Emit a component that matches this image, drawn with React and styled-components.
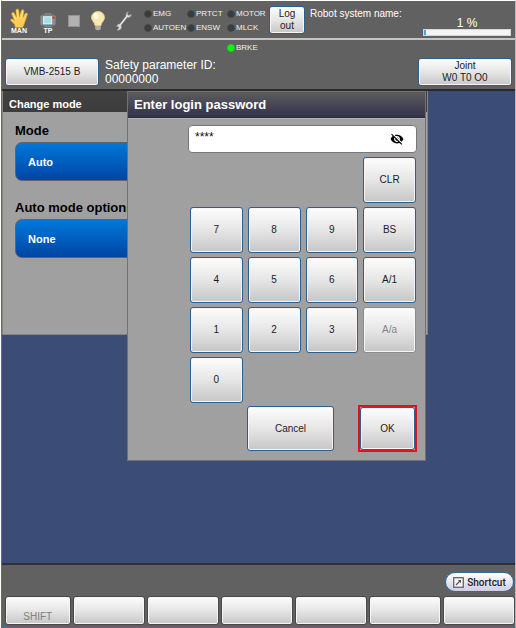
import React, { useState } from "react";
import styled, { createGlobalStyle } from "styled-components";
import { MdVisibilityOff } from "react-icons/md";

const lamps = ["EMG", "PRTCT", "MOTOR", "AUTOEN", "ENSW", "MLCK"];

const keys = [
  { label: "CLR", column: 4 },
  { label: "7" },
  { label: "8" },
  { label: "9" },
  { label: "BS" },
  { label: "4" },
  { label: "5" },
  { label: "6" },
  { label: "A/1" },
  { label: "1" },
  { label: "2" },
  { label: "3" },
  { label: "A/a", disabled: true },
  { label: "0" },
];

const functionKeys = ["SHIFT", "", "", "", "", "", ""];

const HandIcon = () => (
  <svg width="18" height="20" viewBox="0 0 18 20">
    <path
      d="M5.4 19.5 L4.4 16 L1 13 Q-.2 11.4 1.4 10.9 Q2.4 10.8 4.4 12.2 L1.8 6.4 Q1.3 4.8 2.6 4.4 Q3.7 4.2 4.4 5.5 L6.5 9.2 L5.9 2.6 Q6 1 7.3.9 Q8.6.9 8.8 2.4 L9.6 8.8 L11.3 2.6 Q11.9 1.3 13.1 1.7 Q14.2 2.2 13.9 3.6 L12.9 9.4 L15.2 5.6 Q16.2 4.4 17.1 5.2 Q17.9 6 17.2 7.3 L14.8 14.2 L12.8 19.5 Z"
      fill="#ffcf55"
      stroke="#d99a2c"
      strokeWidth="0.5"
    />
    <path d="M7.2 2.6 L7.9 10 M3 6 L5.8 11.4 M12.8 3.2 L11.2 10" stroke="#ffe595" strokeWidth="0.9" fill="none" />
  </svg>
);

const PendantIcon = () => (
  <svg width="16" height="15" viewBox="0 0 16 15">
    <path d="M4.6 2.2 L5.4 .8 H10.6 L11.4 2.2" fill="none" stroke="#8b8f92" strokeWidth="1.2" />
    <rect x="0.5" y="2.2" width="15" height="10" rx="1.6" fill="#8b9193" stroke="#777d80" />
    <rect x="3.6" y="3.8" width="8" height="7" fill="#9fe0ea" stroke="#e6f2f4" />
    <circle cx="13.5" cy="4.8" r="1.2" fill="#f22" />
    <path d="M4 12.7 L4.6 14.2 H11.4 L12 12.7 Z" fill="#858a8d" />
  </svg>
);

const BulbIcon = () => (
  <svg width="14" height="20" viewBox="0 0 14 20">
    <path
      d="M7 .5 C3.2.5.5 3.2.5 6.6 C.5 9.8 3.6 11.1 4.2 14.8 H9.8 C10.4 11.1 13.5 9.8 13.5 6.6 C13.5 3.2 10.8.5 7 .5 Z"
      fill="#fbe8b0"
      stroke="#ecd28c"
      strokeWidth="0.8"
    />
    <ellipse cx="5" cy="5" rx="2.3" ry="3" fill="#fffbe4" />
    <path d="M4.2 15 H9.8 V17.5 L8.4 19.3 H5.6 L4.2 17.5 Z" fill="#969696" />
    <path d="M4.2 16 H9.8 M4.5 18 H9.5" stroke="#ddd" strokeWidth="0.7" />
  </svg>
);

const WrenchIcon = () => (
  <svg width="16" height="20" viewBox="0 0 16 20">
    <path
      d="M12.4.6 L11.4 3.2 L12.8 4.4 L15.4 3.2 Q15.3 6.2 12.5 6.4 L11.4 6.2 L5.2 14 Q6.2 16.8 4.3 18.6 Q2.6 19.8 .9 19.1 L2.8 17.2 L2.2 15.6 L.4 15.4 Q1.4 12.8 3.8 13 L9.9 5.2 Q9.6 1.6 12.4.6 Z"
      fill="#dedede"
      stroke="#8a8a8a"
      strokeWidth="0.5"
    />
    <path d="M10.7 5.8 L4.5 13.7" stroke="#fff" strokeWidth="0.7" />
  </svg>
);

const ShortcutIcon = () => (
  <svg width="11" height="11" viewBox="0 0 11 11">
    <rect x="0.7" y="0.7" width="9.6" height="9.6" fill="#f4f4f8" stroke="#666" strokeWidth="1.3" />
    <path d="M3 8 L7.3 3.7" stroke="#555" strokeWidth="1.2" />
    <path d="M4.8 3 H8 V6.2 Z" fill="#555" />
  </svg>
);

const App = () => {
  const [password, setPassword] = useState("****");

  const handleKey = (label) => {
    if (label === "CLR") setPassword("");
    else if (label === "BS") setPassword(password.slice(0, -1));
    else if (label.length === 1) setPassword(password + "*");
  };

  return (
    <>
      <GlobalStyle />
      <Screen>
        <StatusBar>
          <StatusIcons>
            <StatusIcon>
              <HandIcon />
              <IconLabel>MAN</IconLabel>
            </StatusIcon>
            <StatusIcon>
              <PendantIcon />
              <IconLabel>TP</IconLabel>
            </StatusIcon>
            <StopMark />
            <BulbIcon />
            <WrenchIcon />
          </StatusIcons>
          <LampGrid>
            {lamps.map((name) => (
              <Lamp key={name}>
                <Led />
                {name}
              </Lamp>
            ))}
          </LampGrid>
          <LogoutButton>Log out</LogoutButton>
          <SystemName>Robot system name:</SystemName>
          <Speed>
            <SpeedText>1 %</SpeedText>
            <SpeedBar role="progressbar" aria-label="Speed" aria-valuenow={1}>
              <SpeedFill />
            </SpeedBar>
          </Speed>
        </StatusBar>

        <InfoBar>
          <BrakeRow>
            <Lamp>
              <Led $on />
              BRKE
            </Lamp>
          </BrakeRow>
          <InfoRow>
            <RobotButton>VMB-2515 B</RobotButton>
            <SafetyText>
              Safety parameter ID:
              <br />
              00000000
            </SafetyText>
            <JointButton>
              Joint
              <br />
              W0 T0 O0
            </JointButton>
          </InfoRow>
        </InfoBar>

        <Workspace>
          <Panel>
            <PanelTitle>Change mode</PanelTitle>
            <PanelBody>
              <FieldLabel htmlFor="mode">Mode</FieldLabel>
              <ModeSelect id="mode">
                <option>Auto</option>
              </ModeSelect>
              <FieldLabel htmlFor="options">Auto mode options</FieldLabel>
              <ModeSelect id="options">
                <option>None</option>
              </ModeSelect>
            </PanelBody>
          </Panel>

          <Dialog role="dialog" aria-labelledby="dialog-title">
            <DialogTitle id="dialog-title">Enter login password</DialogTitle>
            <DialogBody>
              <PasswordBox>
                <PasswordInput
                  aria-label="Password"
                  value={password}
                  onChange={(e) => setPassword(e.target.value)}
                />
                <EyeButton aria-label="Show password">
                  <MdVisibilityOff size={14} />
                </EyeButton>
              </PasswordBox>
              <Keypad>
                {keys.map((key) => (
                  <Key
                    key={key.label}
                    $column={key.column}
                    disabled={key.disabled}
                    onClick={() => handleKey(key.label)}
                  >
                    {key.label}
                  </Key>
                ))}
              </Keypad>
              <Actions>
                <CancelButton>Cancel</CancelButton>
                <OkFrame>
                  <OkButton>OK</OkButton>
                </OkFrame>
              </Actions>
            </DialogBody>
          </Dialog>
        </Workspace>

        <Footer>
          <ShortcutButton>
            <ShortcutIcon />
            Shortcut
          </ShortcutButton>
          <FunctionKeys>
            {functionKeys.map((label, i) => (
              <FunctionKey key={i} aria-label={label || `F${i}`}>
                {label}
              </FunctionKey>
            ))}
          </FunctionKeys>
        </Footer>
      </Screen>
    </>
  );
};

const GlobalStyle = createGlobalStyle`
  * {
    box-sizing: border-box;
  }
  body {
    margin: 0;
    background: #fff;
    font-family: "Liberation Sans", Arial, sans-serif;
  }
  button, input, select {
    font-family: inherit;
    margin: 0;
  }
  svg {
    display: block;
    flex: none;
  }
`;

const Screen = styled.div`
  min-height: 100vh;
  display: flex;
  flex-direction: column;
  border: 1px solid #2e7d9e;
  border-top-color: #fff;
  border-right-color: #b4b8ba;
  margin-left: 1px;
`;

// Top bars

const StatusBar = styled.header`
  display: flex;
  align-items: center;
  height: 39px;
  padding: 0 4px 0 8px;
  background: #616161;
  border-bottom: 2px solid #c4c4c4;
`;

const StatusIcons = styled.div`
  display: flex;
  align-items: center;
  gap: 11px;
  width: 134px;
  padding-top: 3px;
  flex: none;
`;

const StatusIcon = styled.div`
  display: flex;
  flex-direction: column;
  align-items: center;
  justify-content: flex-end;
  width: 18px;
  height: 26px;
`;

const IconLabel = styled.span`
  height: 6px;
  color: #fff;
  font-size: 7px;
  font-weight: bold;
  line-height: 6px;
`;

const StopMark = styled.div`
  width: 12px;
  height: 12px;
  flex: none;
  background: #b2b2b2;
  border: 1px solid #929292;
`;

const LampGrid = styled.div`
  display: grid;
  grid-template-columns: 43px 40px 42px;
  row-gap: 2px;
  padding-top: 2px;
  flex: none;
`;

const Lamp = styled.div`
  display: flex;
  align-items: center;
  gap: 1px;
  height: 12px;
  color: #f0f0f0;
  font-size: 8px;
  line-height: 12px;
  white-space: nowrap;
`;

const Led = styled.span`
  width: 8px;
  height: 8px;
  flex: none;
  border-radius: 50%;
  background: ${(props) => (props.$on ? "#00ff00" : "#3c3c3c")};
  border: 1px solid ${(props) => (props.$on ? "#1ed01e" : "#484848")};
`;

const PushButton = styled.button`
  padding: 0;
  border: 1px solid #2d5f8e;
  border-radius: 3px;
  background: linear-gradient(#fdfdfd, #e6e6e6 50%, #c6c6c6);
  box-shadow: inset 0 0 0 1px #f6f6f6;
  color: #1c1c24;
  font-size: 10px;
  line-height: 12px;
`;

const LogoutButton = styled(PushButton)`
  width: 36px;
  height: 28px;
  padding: 0 6px;
  flex: none;
`;

const SystemName = styled.div`
  align-self: flex-start;
  padding: 7px 0 0 5px;
  color: #fff;
  font-size: 10px;
  line-height: 12px;
`;

const Speed = styled.div`
  width: 88px;
  margin-left: auto;
  padding-top: 13px;
`;

const SpeedText = styled.div`
  color: #fff;
  font-size: 12px;
  line-height: 12px;
  text-align: center;
`;

const SpeedBar = styled.div`
  height: 7px;
  background: #f4f4f4;
  border: 1px solid #d8d8d8;
`;

const SpeedFill = styled.div`
  width: 2%;
  height: 100%;
  background: #4ea3e0;
`;

const InfoBar = styled.section`
  height: 51px;
  padding: 2px 3px 0;
  background: #616161;
  border-bottom: 2px solid #2a2a2a;
`;

const BrakeRow = styled.div`
  padding-left: 222px;
  height: 14px;
`;

const InfoRow = styled.div`
  display: flex;
  align-items: center;
  height: 32px;
`;

const RobotButton = styled(PushButton)`
  width: 94px;
  height: 28px;
`;

const SafetyText = styled.div`
  padding-left: 6px;
  color: #fff;
  font-size: 12px;
  line-height: 14px;
`;

const JointButton = styled(PushButton)`
  width: 94px;
  height: 28px;
  margin-left: auto;
`;

// Workspace

const Workspace = styled.main`
  position: relative;
  flex: 1;
  min-height: 380px;
  background: #3b4d77;
`;

const Panel = styled.section`
  max-width: 426px;
  background: #a0a0a0;
  border: 1px solid #858585;
  border-top: 0;
`;

const PanelTitle = styled.h2`
  margin: 0;
  padding: 6px 6px 1px;
  background: linear-gradient(#424242, #3c3c3c);
  color: #fff;
  font-size: 11px;
  line-height: 14px;
`;

const PanelBody = styled.div`
  padding: 10px 12px 58px;
`;

const FieldLabel = styled.label`
  display: block;
  height: 20px;
  color: #000;
  font-size: 13px;
  font-weight: bold;
  line-height: 18px;
`;

const ModeSelect = styled.select`
  display: block;
  appearance: none;
  width: 100%;
  height: 39px;
  margin-bottom: 18px;
  padding: 0 12px;
  border: 1px solid #5f6266;
  border-radius: 7px;
  background: linear-gradient(#0078da, #0045a4);
  color: #fff;
  font-size: 11px;
  font-weight: bold;
`;

// Login dialog, drawn over the panel

const Dialog = styled.section`
  position: absolute;
  top: 0;
  left: 125px;
  width: 299px;
  background: #a0a0a0;
  border: 1px solid #727272;
`;

const DialogTitle = styled.h2`
  margin: 0;
  padding: 5px 6px 4px;
  background: linear-gradient(#5c5c5f, #32324b);
  border-bottom: 1px solid #2c2c40;
  color: #fff;
  font-size: 13px;
  line-height: 16px;
`;

const DialogBody = styled.div`
  padding: 6px 8px 8px 60px;
  border-top: 1px solid #b4b4b4;
`;

const PasswordBox = styled.div`
  display: flex;
  align-items: center;
  height: 28px;
  background: #fff;
  border: 1px solid #777;
  border-radius: 4px;
`;

const PasswordInput = styled.input`
  flex: 1;
  min-width: 0;
  height: 24px;
  padding: 0 6px 4px;
  border: 0;
  outline: 0;
  background: transparent;
  color: #111;
  font-size: 12px;
`;

const EyeButton = styled.button`
  padding: 0;
  margin-right: 12px;
  border: 0;
  background: none;
  color: #000;
`;

const Keypad = styled.div`
  display: grid;
  grid-template-columns: repeat(4, 1fr);
  grid-auto-rows: 46px;
  gap: 4px 5px;
  padding: 4px 1px 2px 2px;
`;

const Key = styled(PushButton)`
  grid-column-start: ${(props) => props.$column || "auto"};

  &:disabled {
    color: #858585;
    border-color: #8c8c8c;
  }
`;

const Actions = styled.div`
  display: flex;
  align-items: center;
  justify-content: flex-end;
  gap: 24px;
`;

const CancelButton = styled(PushButton)`
  width: 87px;
  height: 45px;
`;

const OkFrame = styled.div`
  display: flex;
  width: 59px;
  height: 47px;
  border: 2px solid #e01418;
`;

const OkButton = styled(PushButton)`
  flex: 1;
`;

// Bottom bar

const Footer = styled.footer`
  display: flex;
  flex-direction: column;
  padding: 7px 0 2px 3px;
  background: #616161;
  border-top: 2px solid #2c2f3c;
`;

const ShortcutButton = styled.button`
  display: flex;
  align-items: center;
  justify-content: center;
  align-self: flex-end;
  gap: 3px;
  width: 69px;
  height: 20px;
  margin: 0 1px 4px 0;
  padding: 0;
  border: 1px solid #2f6c9c;
  border-radius: 10px;
  background: linear-gradient(#fff, #e4e2ee 60%, #cfcde0);
  color: #222;
  font-family: Roboto, "Liberation Sans", sans-serif;
  font-size: 10px;
  font-weight: 500;
`;

const FunctionKeys = styled.div`
  display: grid;
  grid-template-columns: 10fr repeat(6, 11fr);
  gap: 2px;
`;

const FunctionKey = styled(PushButton)`
  height: 29px;
  padding-top: 12px;
  border-color: #484848;
  color: #808080;
`;

export default App;
